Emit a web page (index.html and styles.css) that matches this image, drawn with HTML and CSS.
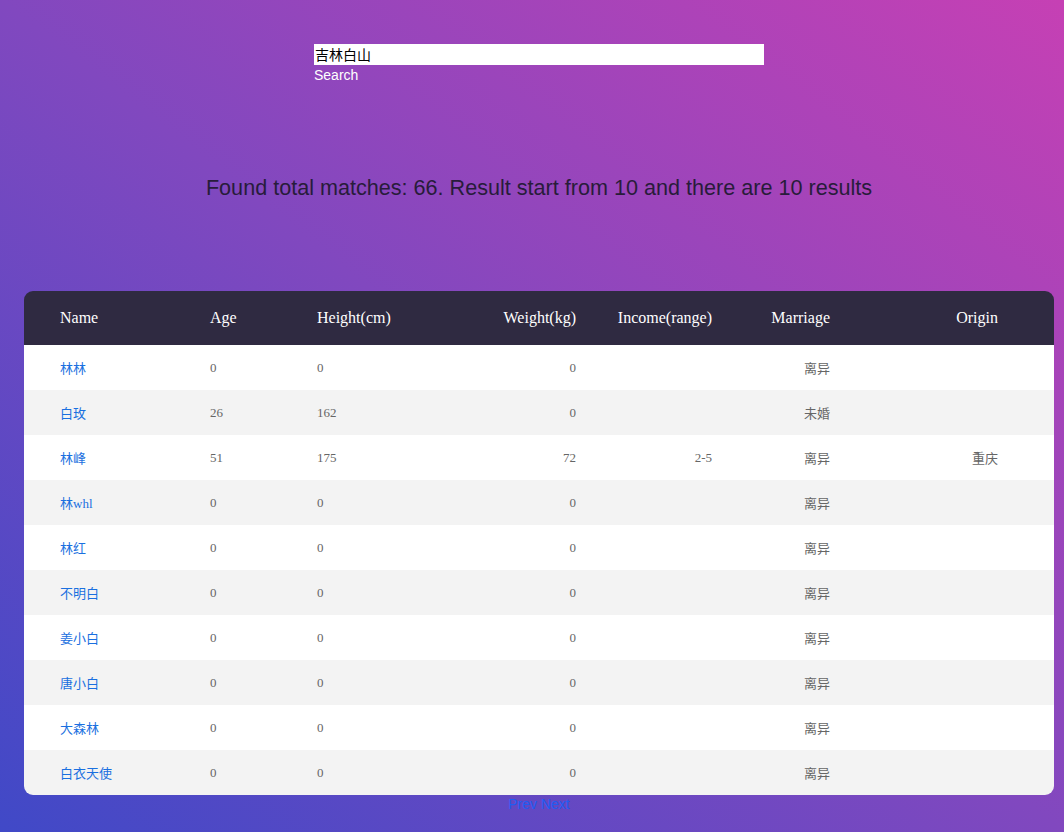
FILE: index.html
```html
<!DOCTYPE html>
<html>
<head>
<meta charset="utf-8">
<link rel="stylesheet" href="styles.css">
</head>
<body>
<div class="page">
  <form class="search">
    <input class="search-input" type="text" value="吉林白山">
    <div class="search-btn">Search</div>
  </form>
  <h2 class="summary">Found total matches: 66. Result start from 10 and there are 10 results</h2>
  <table class="results">
    <colgroup>
      <col class="c-name"><col class="c-age"><col class="c-height"><col class="c-weight"><col class="c-income"><col class="c-marriage"><col class="c-origin">
    </colgroup>
    <thead>
      <tr><th class="l">Name</th><th class="l">Age</th><th class="l">Height(cm)</th><th class="r">Weight(kg)</th><th class="r">Income(range)</th><th class="r">Marriage</th><th class="r last">Origin</th></tr>
    </thead>
    <tbody>
      <tr><td class="l"><a href="#">林林</a></td><td class="l">0</td><td class="l">0</td><td class="r">0</td><td class="r"></td><td class="r">离异</td><td class="r last"></td></tr>
      <tr><td class="l"><a href="#">白玫</a></td><td class="l">26</td><td class="l">162</td><td class="r">0</td><td class="r"></td><td class="r">未婚</td><td class="r last"></td></tr>
      <tr><td class="l"><a href="#">林峰</a></td><td class="l">51</td><td class="l">175</td><td class="r">72</td><td class="r">2-5</td><td class="r">离异</td><td class="r last">重庆</td></tr>
      <tr><td class="l"><a href="#">林whl</a></td><td class="l">0</td><td class="l">0</td><td class="r">0</td><td class="r"></td><td class="r">离异</td><td class="r last"></td></tr>
      <tr><td class="l"><a href="#">林红</a></td><td class="l">0</td><td class="l">0</td><td class="r">0</td><td class="r"></td><td class="r">离异</td><td class="r last"></td></tr>
      <tr><td class="l"><a href="#">不明白</a></td><td class="l">0</td><td class="l">0</td><td class="r">0</td><td class="r"></td><td class="r">离异</td><td class="r last"></td></tr>
      <tr><td class="l"><a href="#">姜小白</a></td><td class="l">0</td><td class="l">0</td><td class="r">0</td><td class="r"></td><td class="r">离异</td><td class="r last"></td></tr>
      <tr><td class="l"><a href="#">唐小白</a></td><td class="l">0</td><td class="l">0</td><td class="r">0</td><td class="r"></td><td class="r">离异</td><td class="r last"></td></tr>
      <tr><td class="l"><a href="#">大森林</a></td><td class="l">0</td><td class="l">0</td><td class="r">0</td><td class="r"></td><td class="r">离异</td><td class="r last"></td></tr>
      <tr><td class="l"><a href="#">白衣天使</a></td><td class="l">0</td><td class="l">0</td><td class="r">0</td><td class="r"></td><td class="r">离异</td><td class="r last"></td></tr>
    </tbody>
  </table>
  <div class="pager"><a href="#">Prev</a> <a href="#">Next</a></div>
</div>
</body>
</html>
```

FILE: styles.css
```css
html, body {
  margin: 0;
  padding: 0;
  height: 100%;
}
body {
  background: linear-gradient(to top right, #4049c7 0%, #8148bf 50%, #c640b4 100%);
  font-family: "Liberation Sans", Arial, "Noto Sans CJK SC", sans-serif;
  overflow: hidden;
}
.page {
  margin: 0 10px 0 24px;
  padding-top: 44px;
  display: flex;
  flex-direction: column;
  align-items: center;
}
.search {
  width: 450px;
  margin: 0;
}
.search-input {
  display: block;
  box-sizing: border-box;
  width: 450px;
  height: 21px;
  margin: 0;
  padding: 0 1px;
  border: none;
  outline: none;
  background: #fff;
  color: #000;
  font-family: "Noto Sans CJK SC", sans-serif;
  font-size: 14px;
  line-height: 21px;
}
.search-btn {
  color: #fff;
  font-size: 14px;
  line-height: 18px;
  padding-top: 1px;
}
.summary {
  margin: 92px 0 0;
  font-size: 21.6px;
  font-weight: normal;
  line-height: 24px;
  color: #281c3a;
  text-align: center;
}
.results {
  margin-top: 91px;
  width: 1030px;
  table-layout: fixed;
  border-collapse: separate;
  border-spacing: 0;
  border-radius: 9px;
  overflow: hidden;
  font-family: "Liberation Serif", "Noto Sans CJK SC", serif;
}
.c-name { width: 150px; }
.c-age { width: 107px; }
.c-height { width: 189px; }
.c-weight { width: 142px; }
.c-income { width: 136px; }
.c-marriage { width: 118px; }
.c-origin { width: 188px; }
.results th, .results td {
  white-space: nowrap;
}
.results .l {
  text-align: left;
  padding: 0 8px 0 36px;
}
.results .r {
  text-align: right;
  padding: 0 36px 0 0;
}
.results .last {
  padding-right: 56px;
}
.results th {
  height: 54px;
  background: #2f2a41;
  color: #fff;
  font-size: 16px;
  font-weight: normal;
}
.results td {
  height: 45px;
  font-size: 13px;
  color: #666;
  background: #fff;
}
.results tbody tr:nth-child(even) td {
  background: #f3f3f3;
}
.results a {
  color: #1a70e0;
  text-decoration: none;
}
.pager {
  font-size: 14px;
  line-height: 17px;
  margin-top: 1px;
}
.pager a {
  color: #1f5df2;
  text-decoration: none;
}
```
